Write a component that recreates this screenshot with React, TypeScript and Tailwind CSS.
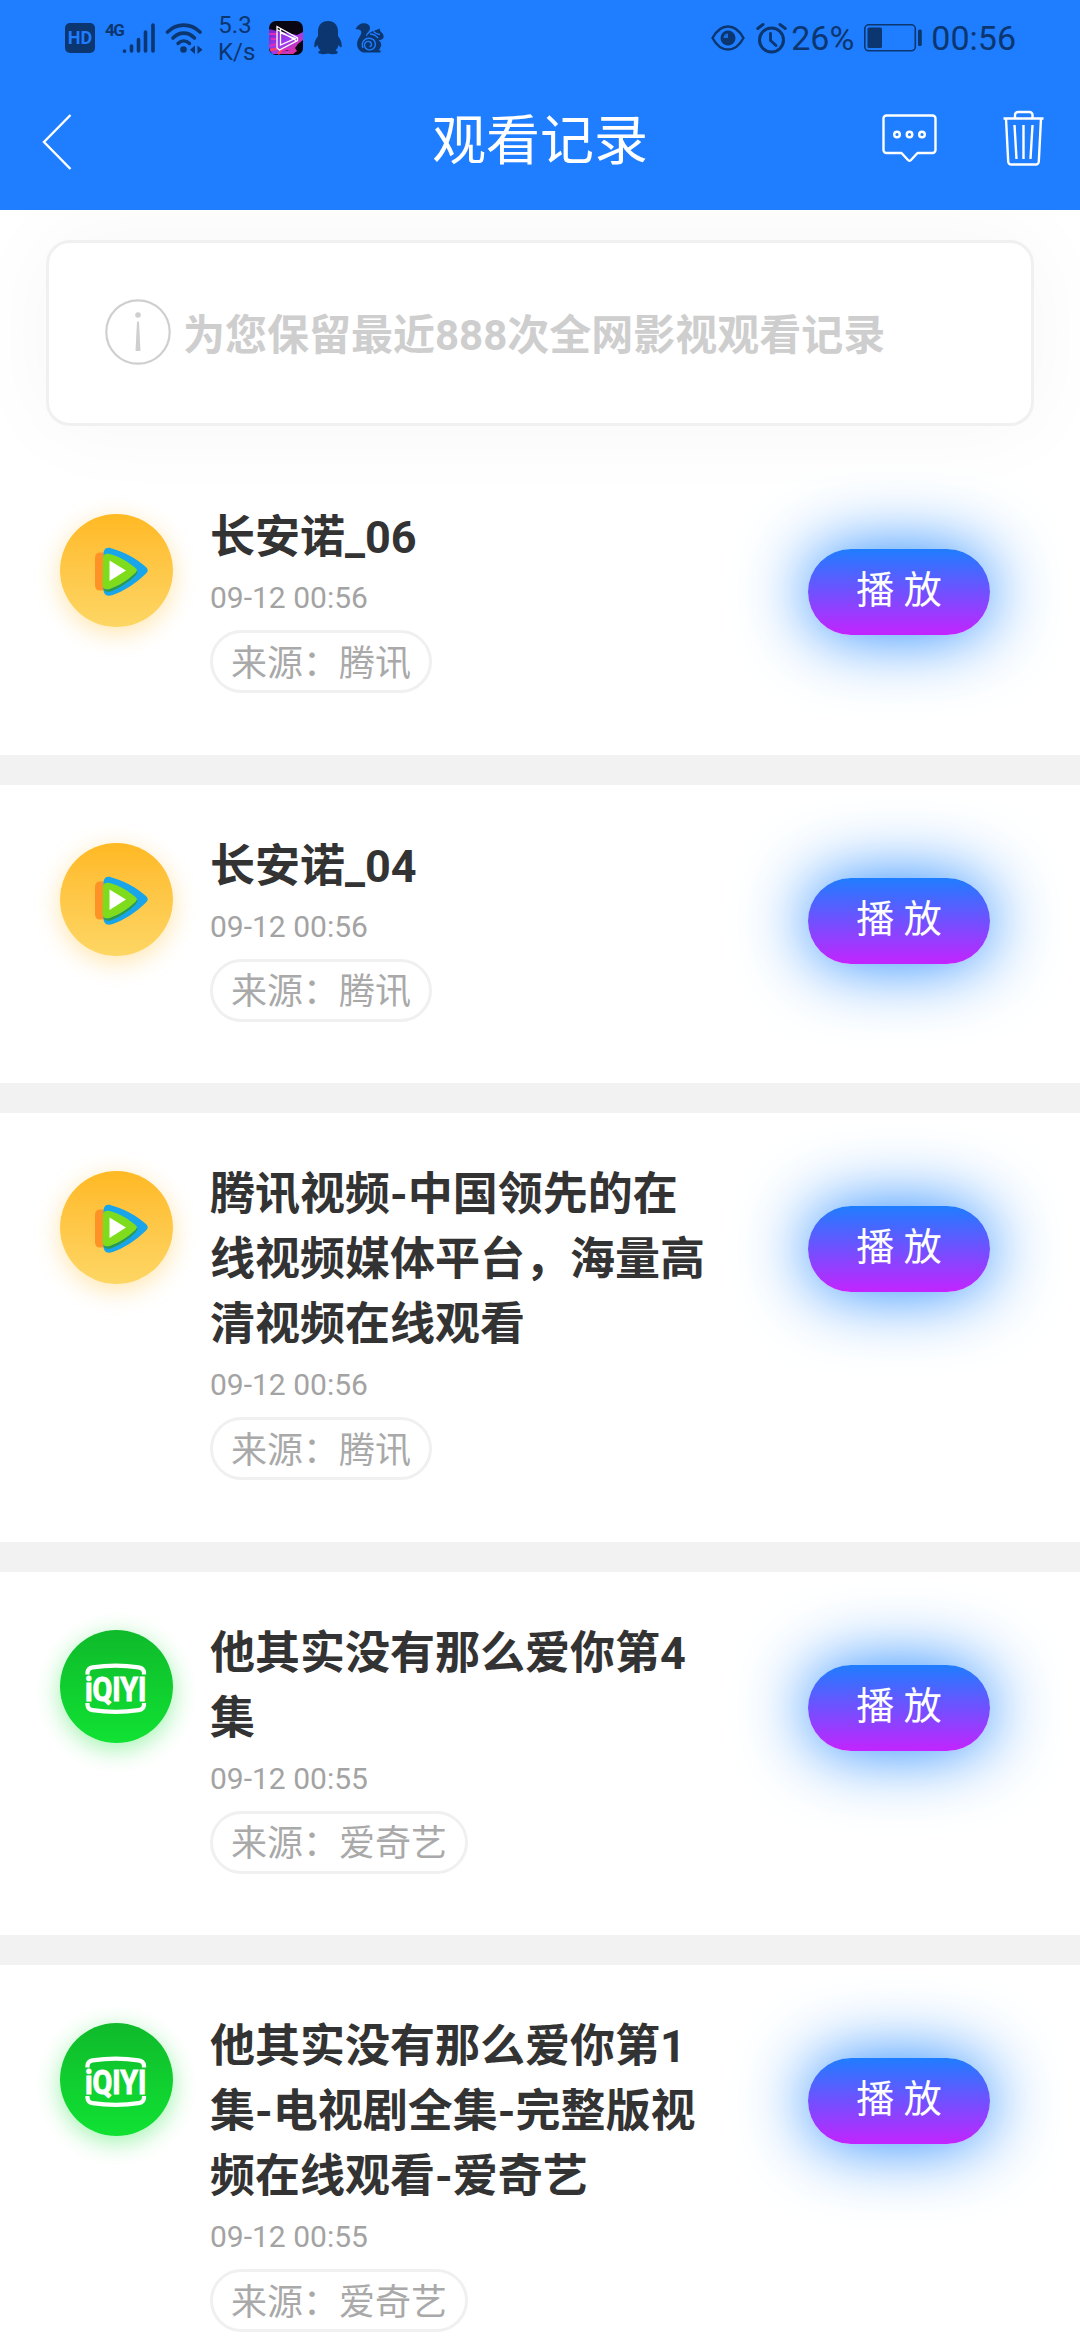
import clsx from 'clsx'
import type { FC, ReactNode } from 'react'

type Source = 'tencent' | 'iqiyi'

interface WatchRecord {
	id: number
	title: string
	watchedAt: string
	source: Source
}

const SOURCE_LABEL: Record<Source, string> = {
	tencent: '腾讯',
	iqiyi: '爱奇艺'
}

const RECORDS: WatchRecord[] = [
	{ id: 1, title: '长安诺_06', watchedAt: '09-12 00:56', source: 'tencent' },
	{ id: 2, title: '长安诺_04', watchedAt: '09-12 00:56', source: 'tencent' },
	{ id: 3, title: '腾讯视频-中国领先的在线视频媒体平台，海量高清视频在线观看', watchedAt: '09-12 00:56', source: 'tencent' },
	{ id: 4, title: '他其实没有那么爱你第4集', watchedAt: '09-12 00:55', source: 'iqiyi' },
	{ id: 5, title: '他其实没有那么爱你第1集-电视剧全集-完整版视频在线观看-爱奇艺', watchedAt: '09-12 00:55', source: 'iqiyi' }
]

const HdIcon: FC = () => (
	<span className="flex h-[30px] w-[30px] items-center justify-center rounded-[5px] bg-[#0b366f] text-[18px] leading-[30px] font-bold text-[#1f7dff]">
		HD
	</span>
)

const SignalIcon: FC = () => (
	<div className="ml-[10px] flex h-8 w-[52px] items-start">
		<span className="w-[15px] text-[17px] leading-[16px] font-bold tracking-[-1.5px]">4G</span>
		<svg className="h-8 w-[37px] shrink-0" viewBox="15 0 37 32" stroke="currentColor" strokeWidth="3.6" strokeLinecap="round">
			<path d="M19.500 29v.300M26.500 24v5M33.500 17.500v11.500M40.500 10v19M48 3v26" />
		</svg>
	</div>
)

const WifiIcon: FC = () => (
	<svg className="ml-[8px] h-8 w-[38px]" viewBox="0 0 38 32" fill="none" stroke="currentColor" strokeLinecap="round">
		<path d="M2.500 10C12 .800 25.500 .800 35 10" strokeWidth="3.600" />
		<path d="M8 16C14.500 9.500 23 9.500 29.500 16" strokeWidth="3.600" />
		<path d="M13 21.500C16.500 18 21 18 24.500 21.500" strokeWidth="3.400" />
		<circle cx="18.500" cy="27.500" r="3.300" fill="currentColor" stroke="none" />
		<path d="M30 23.500v8.500l-5-4.200zM32.500 32v-8.500l5 4.200z" fill="currentColor" stroke="none" />
	</svg>
)

const PlayerAppIcon: FC = () => (
	<svg className="ml-[17px] h-[34px] w-[34px]" viewBox="0 0 34 34">
		<defs>
			<linearGradient id="player-bg" x1="0" y1="0" x2="1" y2="1">
				<stop offset="0" stopColor="#7a22c8" />
				<stop offset=".5" stopColor="#9a3df0" />
				<stop offset="1" stopColor="#ff2a78" />
			</linearGradient>
			<clipPath id="player-clip">
				<rect width="34" height="34" rx="7" />
			</clipPath>
		</defs>
		<g clipPath="url(#player-clip)">
			<rect width="34" height="34" fill="#0a0512" />
			<path d="M0 8l8 2 10 2 10 2 6-3v8l-5 4-3 4 2 3-4 3H3l-3-6z" fill="url(#player-bg)" />
			<path d="M0 13h9M2 18h6M0 25l8-2M10 31l8-3 4 1" stroke="#e02bb8" strokeWidth="2" />
			<path d="M1 29l7-1M9 33l4-4" stroke="#ff3b62" strokeWidth="2.500" />
			<path
				d="M8 5.500L28.500 17v2.500L10.500 29 8 27zM11.500 12v12L26 17.500zM8 8.500L27 19.500M11.500 24V8"
				fill="none"
				stroke="#fff"
				strokeWidth="1.300"
			/>
		</g>
	</svg>
)

const PenguinIcon: FC = () => (
	<svg className="ml-[11px] h-[34px] w-[28px]" viewBox="0 0 28 34" fill="currentColor">
		<path d="M14 0C7.500 0 4 4.500 4 10.500v4.500C1.500 18 0 22 .300 25.500c.200 1.500 1.200 1 3.200-1.500.600 2.500 1.500 4 3 5.500-2 .500-2.500 1.500-2 2.500.500 1.500 6 1.500 9.500 .500 3.500 1 9 1 9.500-.500.500-1 0-2-2-2.500 1.500-1.500 2.400-3 3-5.500 2 2.500 3 3 3.200 1.500C28 22 26.500 18 24 15v-4.500C24 4.500 20.500 0 14 0z" />
	</svg>
)

const SquirrelIcon: FC = () => (
	<svg className="ml-[13px] h-[30px] w-[29px]" viewBox="0 0 29 30">
		<path
			d="M.5 6C3 1 7-.5 11 .500c4 1 5 4.500 3 7.500-2 2.500-3.500 4-2.500 5.500 1.500-3 4-4.500 7-5.500L25 5.500c-.500 1.500 0 2.500 1 3.500 2 1.500 3 3.500 2.500 5.500-.500 2-3 2.500-5 2.500C26 19 26.500 21 26 23c-.400 1.500-1.200 3-2.500 4.200h2v2.300H9C3.500 28.500 1 23 2.500 18 3.500 14 7.500 11 6 8 5 6.200 2.500 6.500 .5 6z"
			fill="currentColor"
		/>
		<g fill="none" stroke="#1f7dff" strokeWidth="1.400">
			<path d="M8 25C5.500 18.500 10.500 14.500 15.500 15.500c5.500 1 6.500 8 2 10.700-3 1.500-7 .500-8-3.200 -.500-3 2-5 4.500-4.500 3 .700 3.500 4.500 .500 5.200" />
			<path d="M15 11c4 0 6 1.500 8 4M18.500 8.500c2 2 4 3 6.500 3" />
		</g>
	</svg>
)

const EyeIcon: FC = () => (
	<svg className="h-[26px] w-[34px]" viewBox="0 0 34 26">
		<path
			d="M1.500 13C5 6.500 10.500 1.500 17 1.500S29 6.500 32.500 13C29 19.500 23.500 24.500 17 24.500S5 19.500 1.500 13z"
			fill="none"
			stroke="currentColor"
			strokeWidth="2.400"
		/>
		<circle cx="17" cy="13" r="7.500" fill="currentColor" />
		<path d="M17 8.500v4.500h-4.500a4.500 4.500 0 0 1 4.500-4.500z" fill="#1f7dff" opacity=".8" />
	</svg>
)

const AlarmIcon: FC = () => (
	<svg className="ml-[11px] h-[31px] w-[31px]" viewBox="0 0 31 31" fill="none" stroke="currentColor" strokeLinecap="round">
		<circle cx="15.500" cy="17" r="12" strokeWidth="3" />
		<path d="M14.500 10.500V17.500l5.500 5" strokeWidth="2.800" />
		<path d="M1.800 5.500L7 1.500M29.200 5.500L24 1.500" strokeWidth="3" />
	</svg>
)

const BatteryIcon: FC = () => (
	<svg className="ml-[10px] h-[28px] w-[58px]" viewBox="0 0 58 28">
		<rect x=".8" y=".8" width="50.500" height="26" rx="4" fill="none" stroke="currentColor" strokeWidth="1.600" />
		<rect x="3.500" y="3.500" width="14.500" height="20.500" rx="1.500" fill="currentColor" />
		<rect x="54" y="5.500" width="3.800" height="16.500" rx="1.500" fill="currentColor" />
	</svg>
)

const StatusBar: FC = () => (
	<div className="flex h-[76px] items-center justify-between pr-[64px] pl-[65px] text-[#0b366f]">
		<div className="flex items-center">
			<HdIcon />
			<SignalIcon />
			<WifiIcon />
			<div className="mt-[2px] ml-[15px] w-[34px] text-center text-[24px] leading-[27px]">
				<div>5.3</div>
				<div>K/s</div>
			</div>
			<PlayerAppIcon />
			<PenguinIcon />
			<SquirrelIcon />
		</div>
		<div className="flex items-center">
			<EyeIcon />
			<AlarmIcon />
			<span className="ml-[4px] text-[34px] leading-[34px]">26%</span>
			<BatteryIcon />
			<span className="ml-[9px] text-[34px] leading-[34px]">00:56</span>
		</div>
	</div>
)

const Header: FC = () => (
	<header className="relative z-10 h-[210px] bg-[#1f7dff]">
		<StatusBar />
		<div className="grid h-[132px] grid-cols-3 items-center pr-[36px] pl-[42px] text-white">
			<svg className="h-[56px] w-[30px]" viewBox="0 0 30 56" fill="none" stroke="currentColor" strokeWidth="2.400">
				<path d="M28.500 1L2 28l26.500 27" />
			</svg>
			<h1 className="-ml-[6px] text-center text-[54px] leading-[64px] whitespace-nowrap">观看记录</h1>
			<div className="flex items-center justify-end gap-[66px] pb-[8px]">
				<svg className="h-[48px] w-[55px]" viewBox="0 0 55 48" fill="none" stroke="currentColor" strokeWidth="2.400">
					<path
						d="M4.500 1.500h46a3 3 0 0 1 3 3v31.500a3 3 0 0 1-3 3H35.500l-6.500 7q-1.500 1.500-3 0L19.500 39H4.500a3 3 0 0 1-3-3V4.500a3 3 0 0 1 3-3z"
						strokeLinejoin="round"
					/>
					<circle cx="15" cy="20.500" r="2.800" />
					<circle cx="27.500" cy="20.500" r="2.800" />
					<circle cx="40" cy="20.500" r="2.800" />
				</svg>
				<svg
					className="h-[56px] w-[41px]"
					viewBox="0 0 41 56"
					fill="none"
					stroke="currentColor"
					strokeWidth="2.400"
					strokeLinejoin="round"
				>
					<path d="M.500 8.500h40M12 8.500V5a3 3 0 0 1 3-3h11.500a3 3 0 0 1 3 3v3.500" />
					<path d="M3 8.500l2.200 43a3 3 0 0 0 3 3h24.600a3 3 0 0 0 3-3L38 8.500" />
					<path d="M11.500 15l2 34M20.500 15v34M29.500 15l-2 34" />
				</svg>
			</div>
		</div>
	</header>
)

const Notice: FC = () => (
	<div className="mx-[46px] mt-[30px] flex h-[186px] items-center rounded-[24px] border-[3px] border-[#f0f0f0] bg-white pl-[56px] shadow-[0_0_90px_rgba(0,0,0,0.04)]">
		<svg className="mb-[2px] h-[66px] w-[66px]" viewBox="0 0 66 66">
			<circle cx="33" cy="33" r="31.700" fill="none" stroke="#cfcfcf" strokeWidth="2.200" />
			<circle cx="33" cy="16" r="2.800" fill="#cfcfcf" />
			<path d="M32 22.500h2l1.500 29.500h-5z" fill="#cfcfcf" />
		</svg>
		<p className="mt-[6px] ml-[12px] text-[42px] leading-[60px] font-bold text-[#cecece]">
			为您保留最近888次全网影视观看记录
		</p>
	</div>
)

const TencentLogo: FC = () => (
	<svg className="size-full" viewBox="0 0 113 113">
		<path d="M43.500 38.500H40q-5 0-5 5.500v27q0 5.500 5 5.500h3.500z" fill="#ff9226" />
		<path
			d="M43.500 39c.500-4 3-6 7.500-4.800 13 3.500 25.500 10.300 35 18.800q3.500 3.300 0 6.600C76 69.500 64.500 77 52 81.300c-4.500 1.500-8-.500-8.500-4.800z"
			fill="#19a5ea"
		/>
		<path
			d="M43 43.500c.500-3.500 3-4.500 6.500-3.500C59 42.500 68 47.500 75.500 54q3 2.500 0 5C68 66 60 71.500 50 75c-4.500 1.500-7.500 0-7.500-4.500z"
			fill="#7edc1c"
		/>
		<path d="M43 73.500c2 2.500 4 2.500 7 1.500 10-3.500 18-9 25.500-16l1.500-2.500c1 2-.500 4-2 5.500C68 68.500 60 74 51 77.200c-4 1.300-7 .300-8-3.700z" fill="#2a9a4a" />
		<path d="M49.500 46.500v20.500L66 56.500z" fill="#fff" />
	</svg>
)

const IqiyiLogo: FC = () => (
	<svg className="size-full" viewBox="0 0 113 113">
		<g fill="none" stroke="#fff" strokeWidth="4.200">
			<path d="M27.500 44.500v-2q.500-4.500 5-5.200 23.500-3.500 46 0 5 .700 5.500 5.200v2" />
			<path d="M27.500 73v2q.500 4.500 5 5.200 23.500 3.500 46 0 5-.700 5.500-5.200v-2" />
		</g>
		<text
			x="25"
			y="70.500"
			textLength="61.500"
			lengthAdjust="spacingAndGlyphs"
			strokeWidth="1"
			className="fill-white stroke-white font-[Roboto] text-[34px] font-bold"
		>
			iQIYI
		</text>
	</svg>
)

const SourceAvatar: FC<{ source: Source }> = ({ source }) => (
	<div
		className={clsx(
			'mt-[58px] size-[113px] shrink-0 rounded-full bg-linear-to-b',
			source === 'tencent'
				? 'from-[#ffb921] to-[#fdd663] shadow-[0_6px_24px_rgba(255,190,50,0.4)]'
				: 'from-[#0fba2b] to-[#10e233] shadow-[0_6px_24px_rgba(16,226,51,0.4)]'
		)}
	>
		{source === 'tencent' ? <TencentLogo /> : <IqiyiLogo />}
	</div>
)

const Tag: FC<{ children: ReactNode }> = ({ children }) => (
	<span className="mt-[10px] inline-flex h-[63px] items-center rounded-full border-[3px] border-[#f0f0f0] px-[18px] pt-[4px] text-[36px] leading-[52px] whitespace-nowrap text-[#a9a9a9]">
		{children}
	</span>
)

const RecordItem: FC<{ record: WatchRecord }> = ({ record }) => (
	<li className="flex items-start overflow-hidden pr-[90px] pb-[61.5px] pl-[60px]">
		<SourceAvatar source={record.source} />
		<div className="mt-[49px] ml-[37px] flex w-[508px] shrink-0 flex-col items-start">
			<h2 className="text-[45px] leading-[65px] font-bold break-all text-[#333333]">{record.title}</h2>
			<time className="mt-[6px] text-[30px] leading-[44px] text-[#a3a3a3]">{record.watchedAt}</time>
			<Tag>来源：{SOURCE_LABEL[record.source]}</Tag>
		</div>
		<button
			type="button"
			className="mt-[93px] ml-auto h-[86px] w-[182px] rounded-full bg-linear-to-b/srgb from-[#1f7dff] to-[#c324ff] pb-[4px] text-[38px] leading-[50px] text-white shadow-[0_0_70px_#1f86ff]"
		>
			播 放
		</button>
	</li>
)

export default function App() {
	return (
		<div className="h-[2340px] w-[1080px] overflow-hidden bg-white font-[Roboto,'Noto_Sans_CJK_SC',sans-serif]">
			<Header />
			<Notice />
			<ul className="mt-[30px] divide-y-[30px] divide-[#f2f2f2]">
				{RECORDS.map(record => (
					<RecordItem key={record.id} record={record} />
				))}
			</ul>
		</div>
	)
}
